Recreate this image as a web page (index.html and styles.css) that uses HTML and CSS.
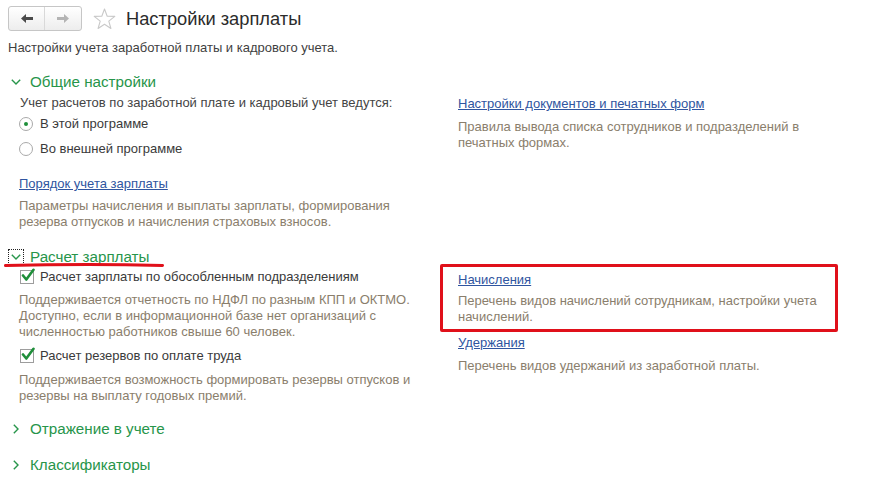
FILE: index.html
```html
<!DOCTYPE html>
<html lang="ru">
<head>
<meta charset="utf-8">
<title>Настройки зарплаты</title>
<link rel="stylesheet" href="styles.css">
</head>
<body>
<div class="page">
  <header class="topbar">
    <div class="nav">
      <span class="nav-btn nav-back">
        <svg width="12" height="9" viewBox="0 0 12 9"><polygon points="0,4.5 5,0 5,3 12,3 12,6 5,6 5,9" fill="#4a4a4a"/></svg>
      </span>
      <span class="nav-btn nav-fwd">
        <svg width="12" height="9" viewBox="0 0 12 9"><polygon points="12,4.5 7,0 7,3 0,3 0,6 7,6 7,9" fill="#b4b4b4"/></svg>
      </span>
    </div>
    <svg class="star" width="23" height="22" viewBox="0 0 23 22"><polygon points="11.5,1 14.2,8.2 21.8,8.4 15.8,13.1 17.9,20.5 11.5,16.2 5.1,20.5 7.2,13.1 1.2,8.4 8.8,8.2" fill="none" stroke="#c9c9c9" stroke-width="1.1" stroke-linejoin="round"/></svg>
    <h1 class="title">Настройки зарплаты</h1>
  </header>
  <p class="subtitle">Настройки учета заработной платы и кадрового учета.</p>

  <section class="group">
    <div class="group-head">
      <span class="chev"><svg width="10" height="6" viewBox="0 0 10 6"><polyline points="0.8,0.8 5,5 9.2,0.8" fill="none" stroke="#27954a" stroke-width="1.4"/></svg></span>
      <span class="group-title">Общие настройки</span>
    </div>
    <div class="group-body body-first">
      <div class="col">
        <div class="label">Учет расчетов по заработной плате и кадровый учет ведутся:</div>
        <div class="radio-row"><span class="radio radio-on"></span><span>В этой программе</span></div>
        <div class="radio-row"><span class="radio"></span><span>Во внешней программе</span></div>
        <a class="link link-left" href="#">Порядок учета зарплаты</a>
        <p class="desc">Параметры начисления и выплаты зарплаты, формирования<br>резерва отпусков и начисления страховых взносов.</p>
      </div>
      <div class="col">
        <a class="link link-right" href="#">Настройки документов и печатных форм</a>
        <p class="desc desc-right">Правила вывода списка сотрудников и подразделений в<br>печатных формах.</p>
      </div>
    </div>
  </section>

  <section class="group">
    <div class="group-head head-marked">
      <span class="chev chev-focus"><svg width="10" height="6" viewBox="0 0 10 6"><polyline points="0.8,0.8 5,5 9.2,0.8" fill="none" stroke="#27954a" stroke-width="1.4"/></svg></span>
      <span class="group-title">Расчет зарплаты</span>
      <svg class="underline-mark" width="160" height="6" viewBox="0 0 160 6"><path d="M1.5 3.6 Q 80 1.6 158.5 3.4" fill="none" stroke="#e0101a" stroke-width="3" stroke-linecap="round"/></svg>
    </div>
    <div class="group-body">
      <div class="col">
        <div class="check-row">
          <span class="checkbox"><svg width="16" height="16" viewBox="0 0 16 16"><path d="M3 7.5 L6.3 11.5 L13.5 1.8" fill="none" stroke="#1f8f3a" stroke-width="2.6" stroke-linecap="round" stroke-linejoin="round"/></svg></span>
          <span>Расчет зарплаты по обособленным подразделениям</span>
        </div>
        <p class="desc desc-check">Поддерживается отчетность по НДФЛ по разным КПП и ОКТМО.<br>Доступно, если в информационной базе нет организаций с<br>численностью работников свыше 60 человек.</p>
        <div class="check-row check-second">
          <span class="checkbox"><svg width="16" height="16" viewBox="0 0 16 16"><path d="M3 7.5 L6.3 11.5 L13.5 1.8" fill="none" stroke="#1f8f3a" stroke-width="2.6" stroke-linecap="round" stroke-linejoin="round"/></svg></span>
          <span>Расчет резервов по оплате труда</span>
        </div>
        <p class="desc desc-check2">Поддерживается возможность формировать резервы отпусков и<br>резервы на выплату годовых премий.</p>
      </div>
      <div class="col">
        <div class="marked-box">
          <a class="link" href="#">Начисления</a>
          <p class="desc desc-box">Перечень видов начислений сотрудникам, настройки учета<br>начислений.</p>
        </div>
        <a class="link link-after-box" href="#">Удержания</a>
        <p class="desc desc-right">Перечень видов удержаний из заработной платы.</p>
      </div>
    </div>
  </section>

  <section class="group">
    <div class="group-head head-third">
      <span class="chev"><svg width="6" height="10" viewBox="0 0 6 10"><polyline points="0.8,0.8 5,5 0.8,9.2" fill="none" stroke="#27954a" stroke-width="1.4"/></svg></span>
      <span class="group-title">Отражение в учете</span>
    </div>
  </section>

  <section class="group">
    <div class="group-head head-fourth">
      <span class="chev"><svg width="6" height="10" viewBox="0 0 6 10"><polyline points="0.8,0.8 5,5 0.8,9.2" fill="none" stroke="#27954a" stroke-width="1.4"/></svg></span>
      <span class="group-title">Классификаторы</span>
    </div>
  </section>
</div>
</body>
</html>
```

FILE: styles.css
```css
* { box-sizing: border-box; }

html, body {
  margin: 0;
  padding: 0;
  background: #ffffff;
}

body {
  font-family: "Liberation Sans", Arial, sans-serif;
  font-size: 13px;
  line-height: 16px;
  color: #444444;
}

.page {
  padding: 6px 8px 0 8px;
}

/* top bar */
.topbar {
  display: flex;
  align-items: center;
  height: 25px;
}

.nav {
  display: flex;
  width: 74px;
  height: 25px;
  border: 1px solid #c6c6c6;
  border-radius: 3px;
  background: linear-gradient(#ffffff, #ededed);
}

.nav-btn {
  width: 37px;
  display: flex;
  align-items: center;
  justify-content: center;
}

.nav-back {
  border-right: 1px solid #d9d9d9;
}

.star {
  margin-left: 11px;
  display: block;
}

.title {
  margin: 0 0 0 10px;
  font-size: 18.3px;
  font-weight: normal;
  line-height: 25px;
  color: #2b2b2b;
}

.subtitle {
  margin: 9px 0 0 0;
  color: #3f3f3f;
}

/* groups */
.group-head {
  position: relative;
  display: flex;
  align-items: center;
  height: 20px;
  margin-top: 16px;
  color: #27954a;
  font-size: 15.2px;
}

.head-marked {
  margin-top: 17px;
}

.head-third {
  margin-top: 15px;
}

.chev {
  width: 16px;
  height: 16px;
  display: flex;
  align-items: center;
  justify-content: center;
  margin-right: 6px;
}

.chev-focus {
  border: 1px dotted #222222;
}

.underline-mark {
  position: absolute;
  left: -4px;
  top: 15px;
}

.group-body {
  display: grid;
  grid-template-columns: 439px 1fr;
  padding-left: 11px;
}

.body-first {
  margin-top: 3px;
}

.col {
  display: flex;
  flex-direction: column;
  align-items: flex-start;
}

.label {
  padding-left: 1px;
  color: #444444;
}

.radio-row {
  display: flex;
  align-items: center;
  gap: 7px;
  height: 25px;
  color: #3a3a3a;
}

.radio {
  width: 14px;
  height: 14px;
  border: 1px solid #a9a9a9;
  border-radius: 50%;
  background: #ffffff;
  display: flex;
  align-items: center;
  justify-content: center;
}

.radio-on::after {
  content: "";
  width: 4px;
  height: 4px;
  border-radius: 50%;
  background: #1f8f3a;
}

.check-row {
  display: flex;
  align-items: center;
  gap: 6px;
  height: 20px;
  padding-left: 1px;
  color: #3a3a3a;
}

.check-second {
  margin-top: 6px;
}

.checkbox {
  position: relative;
  width: 14px;
  height: 14px;
  border: 1px solid #9d9d9d;
  background: #ffffff;
}

.checkbox svg {
  position: absolute;
  left: -1px;
  top: -3px;
}

.link {
  display: block;
  color: #2f55a0;
  text-decoration: underline;
  line-height: 16px;
}

.link-left {
  margin-top: 15px;
}

.link-right {
  margin-top: 1px;
}

.desc {
  margin: 6px 0 0 0;
  color: #8a7e6c;
}

.desc-right {
  margin-top: 7px;
}

.desc-check {
  margin-top: 5px;
}

.desc-check2 {
  margin-top: 6px;
}

.marked-box {
  width: 398px;
  margin-top: -3px;
  margin-left: -18px;
  border: 3px solid #e0101a;
  border-radius: 2px;
  padding: 5px 0 4px 15px;
}

.desc-box {
  margin-top: 5px;
}

.link-after-box {
  margin-top: 3px;
}
```
